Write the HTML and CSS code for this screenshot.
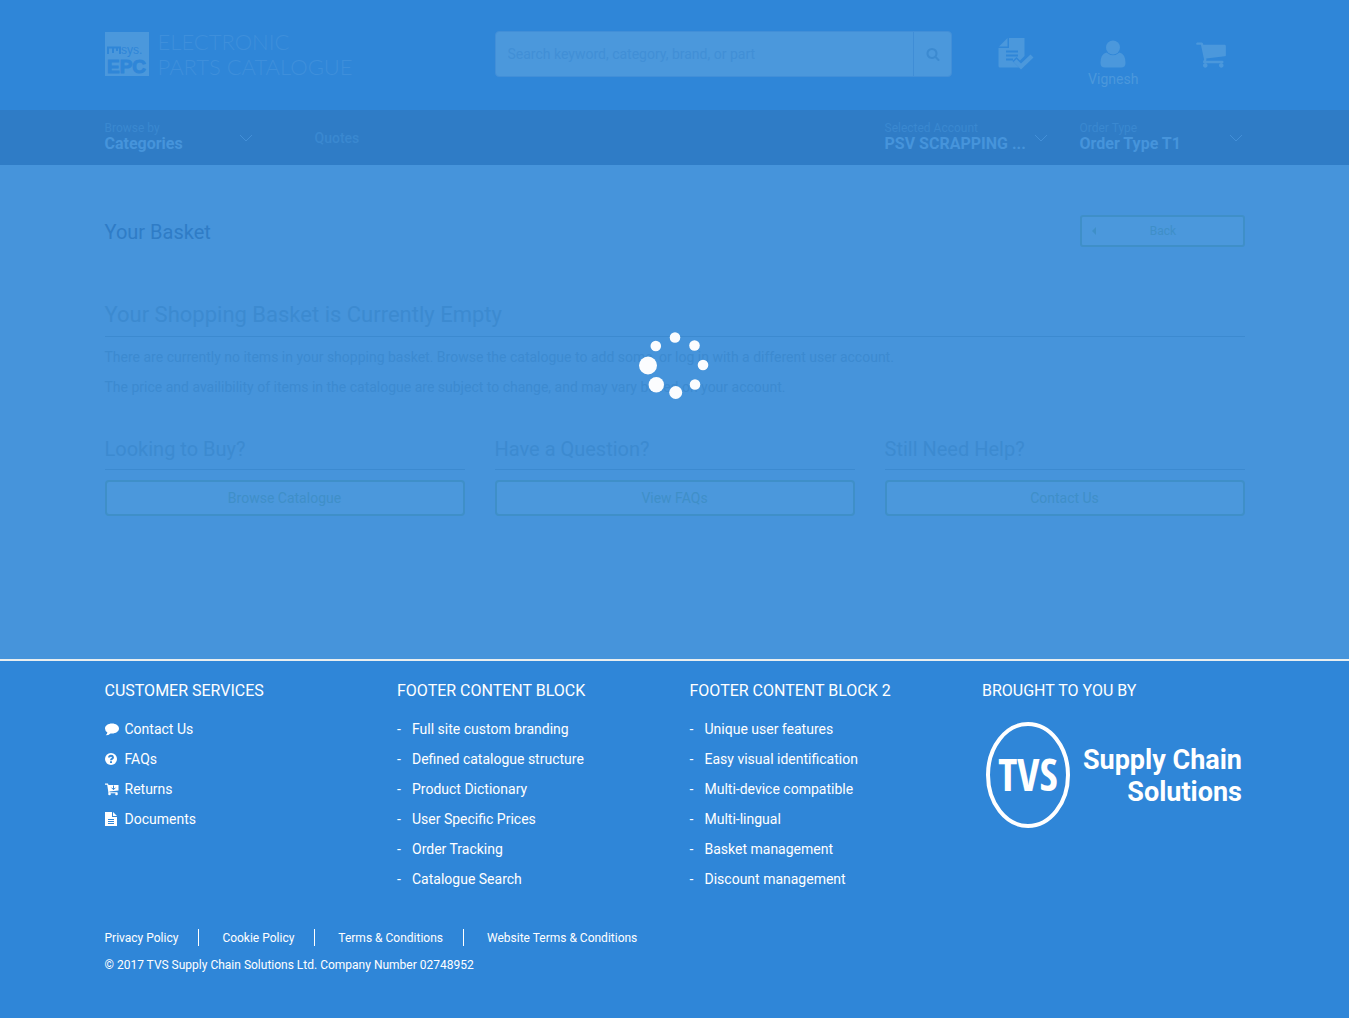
FILE: index.html
```html
<!DOCTYPE html>
<html lang="en">
<head>
<meta charset="utf-8">
<meta name="viewport" content="width=device-width, initial-scale=1">
<title>Your Basket - Electronic Parts Catalogue</title>
<link rel="stylesheet" href="styles.css">
</head>
<body>
<header class="header">
  <div class="container header-row">
    <a class="logo" href="#">
      <svg class="logo-mark" viewBox="0 0 44 44" width="44" height="44" aria-hidden="true">
        <rect class="mark-bg" width="44" height="44"/>
        <path class="mark-line" d="M3 22V15.500H8V21M8 15.500H15V22M12 15.500V19"/>
        <text class="mark-small" x="16" y="22">sys.</text>
        <text class="mark-big" x="2" y="41">EPC</text>
      </svg>
      <span class="logo-text">ELECTRONIC<br>PARTS CATALOGUE</span>
    </a>
    <form class="search" role="search">
      <input class="search-input" type="text" aria-label="Search" placeholder="Search keyword, category, brand, or part">
      <button class="search-button" type="button" aria-label="Search">
        <svg viewBox="0 0 1792 1792" width="14" height="14"><path d="M1216 832q0-185-131.500-316.500t-316.500-131.500-316.500 131.500-131.500 316.500 131.500 316.500 316.500 131.500 316.500-131.500 131.500-316.500zm512 832q0 52-38 90t-90 38q-54 0-90-38l-343-342q-179 124-399 124-143 0-273.500-55.500t-225-150-150-225-55.500-273.500 55.500-273.500 150-225 225-150 273.500-55.500 273.500 55.500 225 150 150 225 55.500 273.500q0 220-124 399l343 343q37 37 37 90z"/></svg>
      </button>
    </form>
    <nav class="tools" aria-label="Account">
      <a class="tool" href="#" aria-label="Orders">
        <svg viewBox="0 0 36 34" width="36" height="34">
          <path d="M11 1H26.500V19L22 23.500L18.500 20L14.500 24L21 30.500H2Q.5 30.500 .5 29V11H11Z"/>
          <path d="M9.500 1V9.500H1Z"/>
          <path class="cut" d="M8 14.500H20M8 18.500H20M8 22.500H15"/>
          <path d="M15.500 25L18.500 22L23 26.500L32.500 17.500L35.500 20.500L23 32.500Z"/>
        </svg>
      </a>
      <a class="tool" href="#">
        <svg viewBox="0 0 26 28" width="26" height="28"><circle cx="13" cy="7.500" r="7"/><path d="M6.500 12.500Q13 18 19.500 12.500Q25.500 14 25.500 23Q25.500 27.500 21 27.500H5Q.5 27.500 .5 23Q.5 14 6.500 12.500Z"/></svg>
        <span>Vignesh</span>
      </a>
      <a class="tool" href="#" aria-label="Basket">
        <svg viewBox="0 0 1792 1792" width="32" height="32"><path d="M704 1536q0 52-38 90t-90 38-90-38-38-90 38-90 90-38 90 38 38 90zm896 0q0 52-38 90t-90 38-90-38-38-90 38-90 90-38 90 38 38 90zm128-1088v512q0 24-16.500 42.500t-40.500 21.500l-1044 122q13 60 13 70 0 16-24 64h920q26 0 45 19t19 45-19 45-45 19h-1024q-26 0-45-19t-19-45q0-11 8-31.500t16-36 21.500-40 15.500-29.500l-177-823h-204q-26 0-45-19t-19-45 19-45 45-19h256q16 0 28.500 6.500t19.500 15.500 13 24.500 8 26 5.500 29.500 4.500 26h1201q26 0 45 19t19 45z"/></svg>
      </a>
    </nav>
  </div>
</header>

<nav class="bar" aria-label="Main">
  <div class="container bar-row">
    <button class="picker picker-browse" type="button">
      <span class="picker-text"><small>Browse by</small><b>Categories</b></span>
      <svg class="chevron" viewBox="0 0 14 8" width="14" height="8"><path d="M1 1L7 7L13 1"/></svg>
    </button>
    <a class="bar-link" href="#">Quotes</a>
    <button class="picker picker-account" type="button">
      <span class="picker-text"><small>Selected Account</small><b>PSV SCRAPPING ...</b></span>
      <svg class="chevron" viewBox="0 0 14 8" width="14" height="8"><path d="M1 1L7 7L13 1"/></svg>
    </button>
    <button class="picker" type="button">
      <span class="picker-text"><small>Order Type</small><b>Order Type T1</b></span>
      <svg class="chevron" viewBox="0 0 14 8" width="14" height="8"><path d="M1 1L7 7L13 1"/></svg>
    </button>
  </div>
</nav>

<main class="main">
  <div class="container">
    <div class="title-row">
      <h1>Your Basket</h1>
      <button class="outline back" type="button"><svg viewBox="0 0 4 8" width="4" height="8"><path d="M4 0V8L0 4Z"/></svg><span>Back</span></button>
    </div>
    <section class="empty">
      <h2>Your Shopping Basket is Currently Empty</h2>
      <p>There are currently no items in your shopping basket. Browse the catalogue to add some, or log in with a different user account.</p>
      <p>The price and availibility of items in the catalogue are subject to change, and may vary based on your account.</p>
    </section>
    <div class="help">
      <section><h3>Looking to Buy?</h3><button class="outline" type="button">Browse Catalogue</button></section>
      <section><h3>Have a Question?</h3><button class="outline" type="button">View FAQs</button></section>
      <section><h3>Still Need Help?</h3><button class="outline" type="button">Contact Us</button></section>
    </div>
  </div>
</main>

<footer class="footer">
  <div class="container">
    <div class="footer-cols">
      <section>
        <h4>CUSTOMER SERVICES</h4>
        <ul class="icon-list">
          <li><svg viewBox="0 0 15 14" width="15" height="14"><path d="M7 1.500C11 1.500 14 3.700 14 6.500S11 11.500 7 11.500Q6.200 11.500 5.500 11.400Q3.500 13.300 .7 13.300Q2.200 12.200 2.400 10.500Q0 9 0 6.500C0 3.700 3 1.500 7 1.500Z"/></svg><a href="#">Contact Us</a></li>
          <li><svg viewBox="0 0 15 14" width="15" height="14"><circle cx="6" cy="7" r="6"/><path class="cut" d="M4 5.500Q4.200 3.700 6 3.700T8 5.300Q8 6.300 6.900 6.900Q6 7.400 6 8.300M6 9.300V11"/></svg><a href="#">FAQs</a></li>
          <li><svg viewBox="0 0 15 14" width="15" height="14"><path d="M0 1.500H3L3.500 3H13.500V8.500L4.500 9.500V10.300H12.500V11.300H3.500L2.200 2.700H0Z"/><circle cx="4.500" cy="12" r="1.300"/><circle cx="11.500" cy="12" r="1.300"/><path class="cut thin" d="M8.500 3.500V7.500M6.500 5.700L8.500 7.700L10.500 5.700"/></svg><a href="#">Returns</a></li>
          <li><svg viewBox="0 0 15 14" width="15" height="14"><path d="M0 0H7V5H12V14H0ZM8 0L12 4H8Z"/><path class="cut thin" d="M3 7.500H9M3 9.500H9M3 11.500H9"/></svg><a href="#">Documents</a></li>
        </ul>
      </section>
      <section>
        <h4>FOOTER CONTENT BLOCK</h4>
        <ul class="dash-list">
          <li>Full site custom branding</li><li>Defined catalogue structure</li><li>Product Dictionary</li><li>User Specific Prices</li><li>Order Tracking</li><li>Catalogue Search</li>
        </ul>
      </section>
      <section>
        <h4>FOOTER CONTENT BLOCK 2</h4>
        <ul class="dash-list">
          <li>Unique user features</li><li>Easy visual identification</li><li>Multi-device compatible</li><li>Multi-lingual</li><li>Basket management</li><li>Discount management</li>
        </ul>
      </section>
      <section>
        <h4>BROUGHT TO YOU BY</h4>
        <svg class="tvs" viewBox="0 0 262 110" width="262" height="110" role="img" aria-label="TVS Supply Chain Solutions">
          <ellipse cx="46" cy="56" rx="40" ry="51"/>
          <text class="tvs-mark" x="46" y="72" text-anchor="middle">TVS</text>
          <text class="tvs-name" x="260" y="50" text-anchor="end">Supply Chain</text>
          <text class="tvs-name" x="260" y="82" text-anchor="end">Solutions</text>
        </svg>
      </section>
    </div>
    <ul class="legal">
      <li><a href="#">Privacy Policy</a></li><li><a href="#">Cookie Policy</a></li><li><a href="#">Terms &amp; Conditions</a></li><li><a href="#">Website Terms &amp; Conditions</a></li>
    </ul>
    <p class="copyright">© 2017 TVS Supply Chain Solutions Ltd. Company Number 02748952</p>
  </div>
</footer>

<div class="loader" role="status" aria-label="Loading">
  <svg viewBox="0 0 80 80" width="80" height="80">
    <circle cx="40" cy="12.500" r="5.300"/><circle cx="59.500" cy="20.500" r="5.300"/><circle cx="68" cy="40" r="5.300"/><circle cx="60" cy="59.500" r="5.300"/><circle cx="40.700" cy="67.500" r="6.500"/><circle cx="21.300" cy="59.700" r="7.700"/><circle cx="13" cy="40.500" r="9"/><circle cx="20.800" cy="21" r="5.300"/>
  </svg>
</div>
</body>
</html>
```
FILE: styles.css
```css
:root {
  --blue: #2f86d8;
  --bar: #2f7cc6;
  --page: #4694db;
  --pale: #4b98dc;
  --faint: #3c8ad0;
  --green: #3f8fc8;
}
* { box-sizing: border-box; }
body {
  margin: 0;
  min-height: 100vh;
  display: flex;
  flex-direction: column;
  position: relative;
  background: var(--blue);
  font: 14px/20px Roboto, "Liberation Sans", sans-serif;
  color: var(--faint);
}
h1, h2, h3, h4, p, ul { margin: 0; padding: 0; font-weight: 400; }
ul { list-style: none; }
a { color: inherit; text-decoration: none; }
button, input { font: inherit; color: inherit; margin: 0; }
button { cursor: pointer; }
svg { fill: currentColor; flex: none; }
.container { width: 100%; max-width: 1170px; margin: 0 auto; padding: 0 15px; }
.cut { fill: none; stroke: var(--blue); stroke-width: 2; }
.thin { stroke-width: 1; }

/* Header */
.header { background: var(--blue); height: 110px; }
.header-row { display: grid; grid-template-columns: 4fr 5fr 3fr; padding: 0; }
.logo { display: flex; gap: 9px; padding: 32px 15px 0; color: #3e8fdb; }
.mark-bg { fill: var(--pale); }
.mark-line { fill: none; stroke: var(--blue); stroke-width: 2; }
.mark-small { font: 400 12px "Liberation Sans", sans-serif; fill: var(--blue); }
.mark-big { font: 700 19px "Liberation Sans", sans-serif; fill: var(--blue); stroke: var(--blue); stroke-width: 1px; }
.logo-text { font: 300 22px/25px Lato, sans-serif; white-space: nowrap; margin-top: -3px; }
.search { display: flex; height: 46px; margin: 31px 15px 0; background: var(--pale); border: 1px solid #428fd8; border-radius: 4px; }
.search-input { flex: 1; min-width: 0; padding: 0 12px; border: 0; background: none; outline: 0; }
.search-input::placeholder { color: #418fd6; opacity: 1; }
.search-button { width: 38px; padding: 0; border: 0; border-left: 1px solid #3f8dd6; background: none; display: grid; place-items: center; }
.tools { display: grid; grid-template-columns: repeat(3, 1fr); padding-top: 37px; color: var(--pale); }
.tool { display: flex; flex-direction: column; align-items: center; }
.tool span { margin-top: 1px; }
.tool:nth-child(2) { padding-top: 3px; }
.tool:last-child { padding-top: 1px; }

/* Navigation bar */
.bar { background: var(--bar); height: 55px; }
.bar-row { display: flex; align-items: center; height: 100%; }
.picker { width: 165px; display: flex; justify-content: space-between; align-items: center; padding: 0; border: 0; background: none; text-align: left; }
.picker-browse { width: 150px; margin-right: 60px; }
.picker-text { padding-bottom: 2px; }
.picker small { display: block; font-size: 12px; line-height: 14px; color: #3a88d0; }
.picker b { display: block; font-size: 16px; line-height: 17px; font-weight: 700; color: #4694db; white-space: nowrap; }
.picker .chevron { fill: none; stroke: #428fd8; stroke-width: 1; margin-right: 2px; }
.bar-link { font-weight: 500; color: #3a88d0; }
.picker-account { margin: 0 30px 0 auto; }

/* Basket */
.main { background: var(--page); min-height: 494px; padding-top: 50px; }
.title-row { display: flex; justify-content: space-between; align-items: center; }
.title-row h1 { font-size: 20px; line-height: 30px; padding-top: 2px; color: var(--bar); }
.outline { width: 100%; height: 36px; padding: 0; border: 2px solid var(--green); border-radius: 4px; background: var(--pale); color: var(--green); }
.back { width: 165px; height: 32px; display: flex; align-items: center; padding: 0 10px; font-size: 12px; border-radius: 3px; }
.back span { flex: 1; text-align: center; padding-right: 2px; }
.empty { margin-top: 50px; }
.empty h2 { font-size: 22px; line-height: 34px; padding: 1px 0 4px; border-bottom: 1px solid var(--faint); margin-bottom: 10px; }
.empty p { margin-bottom: 10px; }
.help { display: grid; grid-template-columns: repeat(3, 1fr); gap: 30px; margin-top: 37px; }
.help h3 { font-size: 20px; line-height: 30px; padding-bottom: 5px; border-bottom: 1px solid var(--faint); margin-bottom: 10px; }

/* Footer */
.footer { flex: 1; border-top: 2px solid #e8eef0; background: var(--blue); color: #fff; padding: 20px 0 40px; }
.footer-cols { display: grid; grid-template-columns: repeat(4, 1fr); gap: 30px; }
.footer h4 { font-size: 16px; line-height: 20px; margin-bottom: 13px; white-space: nowrap; }
.icon-list li, .dash-list li { display: flex; align-items: center; line-height: 30px; }
.icon-list li { gap: 5px; }
.dash-list li::before { content: "-"; width: 15px; }
.tvs { display: block; margin-top: 18px; max-width: 100%; }
.tvs ellipse { fill: none; stroke: #fff; stroke-width: 4; }
.tvs-mark { font: 300 44px "Open Sans Condensed", "Roboto Condensed", "Liberation Sans Narrow", Roboto, sans-serif; }
.tvs-name { font: 700 27px Roboto, sans-serif; }
.legal { display: flex; margin-top: 35px; font-size: 12px; line-height: 16px; }
.legal li { padding-top: 1px; }
.legal li + li { border-left: 1px solid #fff; margin-left: 20px; padding-left: 23px; }
.copyright { margin-top: 9px; font-size: 12px; line-height: 20px; }

/* Loading indicator over the page */
.loader { position: absolute; top: 325px; left: 0; right: 0; display: flex; justify-content: center; color: #fff; opacity: .98; }
```
